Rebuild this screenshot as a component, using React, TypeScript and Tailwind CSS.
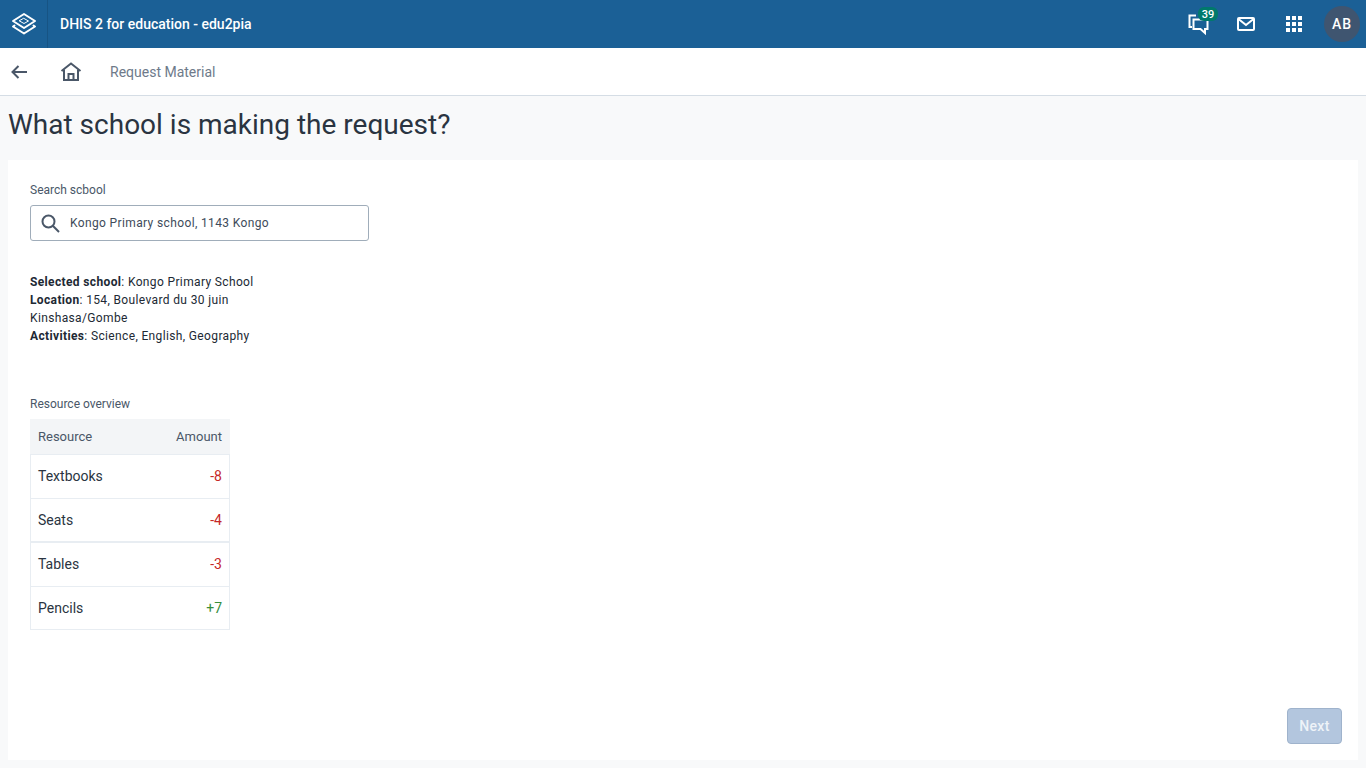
const rows = [
  { name: "Textbooks", amount: "-8", color: "text-[#c62828]", rowClass: "h-[44px] pb-[2px] border-b border-[#e8edf2]" },
  { name: "Seats", amount: "-4", color: "text-[#c62828]", rowClass: "h-[44px] border-b-2 border-[#e8edf2]" },
  { name: "Tables", amount: "-3", color: "text-[#c62828]", rowClass: "h-[44px] pb-[2px] border-b border-[#e8edf2]" },
  { name: "Pencils", amount: "+7", color: "text-[#388e3c]", rowClass: "h-[42px]" },
];

function Logo() {
  return (
    <svg width="26" height="26" viewBox="0 0 26 26" fill="none" stroke="#fff" strokeWidth="2" strokeLinejoin="round" strokeLinecap="round">
      <path d="M13 3 L24 10 L13 17 L2 10 Z" />
      <path d="M13 7.5 L17.5 10 L13 12.5 L8.5 10 Z" strokeWidth="1" />
      <path d="M3.5 14.5 L2 15.5 L13 22.5 L24 15.5 L22.5 14.5" />
    </svg>
  );
}

function Header() {
  return (
    <header className="flex h-12 items-center bg-[#1b6096] text-white">
      <div className="flex h-12 w-12 items-center justify-center border-r border-[#175484]">
        <Logo />
      </div>
      <div className="ml-3 text-sm font-medium">DHIS 2 for education - edu2pia</div>
      <div className="ml-auto flex items-center pr-[6px]">
        <div className="relative flex h-12 w-12 items-center justify-center">
          <svg width="24" height="24" viewBox="0 0 24 24" fill="none" stroke="#fff" strokeWidth="2">
            <path d="M10 3.5 H3.5 V15 H6" />
            <path d="M7.5 7.5 H21.5 V17 H19 V21 L14.5 17 H7.5 Z" />
          </svg>
          <span className="absolute left-[24px] top-[7px] flex h-[14px] w-[20px] items-center justify-center rounded-[6px] bg-[#00796b] text-[11px] font-medium leading-none">
            39
          </span>
        </div>
        <div className="flex h-12 w-12 items-center justify-center">
          <svg width="18" height="14" viewBox="0 0 18 14" fill="none" stroke="#fff" strokeWidth="2">
            <rect x="1" y="1" width="16" height="12" rx="1" />
            <path d="M1.5 2 L9 8 L16.5 2" />
          </svg>
        </div>
        <div className="flex h-12 w-12 items-center justify-center">
          <div className="grid grid-cols-3 gap-[2px]">
            {Array.from({ length: 9 }).map((_, i) => (
              <span key={i} className="h-[4px] w-[4px] bg-white" />
            ))}
          </div>
        </div>
        <div className="ml-[6px] flex h-9 w-9 items-center justify-center rounded-full bg-[#3f5570] text-sm font-medium tracking-[1px]">
          AB
        </div>
      </div>
    </header>
  );
}

function SubBar() {
  return (
    <div className="flex h-12 items-center border-b border-[#d5dde5] bg-white">
      <div className="flex w-[38px] items-center justify-center">
        <svg width="18" height="16" viewBox="0 0 18 16" fill="none" stroke="#4a5768" strokeWidth="2">
          <path d="M17 8 H3 M8.5 2 L2.5 8 L8.5 14" />
        </svg>
      </div>
      <div className="ml-[22px] flex w-[34px] items-center">
        <svg width="22" height="20" viewBox="0 0 22 20" fill="none" stroke="#4a5768" strokeWidth="2">
          <path d="M1.5 9 L11 1.5 L20.5 9" />
          <path d="M4 7.5 V18 H18 V7.5" />
          <path d="M8.5 18 V12 H13.5 V18" />
        </svg>
      </div>
      <div className="ml-4 text-sm text-[#6e7a8a]">Request Material</div>
    </div>
  );
}

export default function App() {
  return (
    <div className="flex h-[768px] flex-col overflow-hidden bg-[#f8f9fa] font-['Roboto',sans-serif] text-[#2a3441] antialiased">
      <Header />
      <SubBar />
      <h1 className="flex h-16 items-center px-2 pb-[7px] text-[28px] font-normal">What school is making the request?</h1>
      <main className="mx-2 mb-2 flex flex-1 flex-col bg-white pl-[22px] pr-4 pt-[22px] pb-4">
        <label className="text-xs leading-4 text-[#4a5768]">Search scbool</label>
        <div className="mt-[7px] flex h-9 w-[339px] items-center rounded-[3px] border border-[#a0adba] bg-white pl-[10px]">
          <svg width="19" height="19" viewBox="0 0 19 19" fill="none" stroke="#4a5768" strokeWidth="2">
            <circle cx="7.5" cy="7.5" r="6" />
            <path d="M11.8 11.8 L18 18" />
          </svg>
          <span className="ml-[10px] text-xs tracking-[0.37px] text-[#404b5a]">Kongo Primary school, 1143 Kongo</span>
        </div>
        <div className="mt-[32px] text-xs leading-[18px] tracking-[0.36px] text-[#212934]">
          <div><b className="font-bold">Selected school</b>: Kongo Primary School</div>
          <div><b className="font-bold">Location</b>: 154, Boulevard du 30 juin</div>
          <div>Kinshasa/Gombe</div>
          <div><b className="font-bold">Activities</b>: Science, English, Geography</div>
        </div>
        <div className="mt-[51px] text-xs leading-4 text-[#4a5768]">Resource overview</div>
        <div className="mt-[7px] w-[200px] border-x border-b border-[#e8edf2] text-sm">
          <div className="-mx-px flex h-[36px] items-center justify-between border-b border-[#e8edf2] bg-[#f3f5f7] px-2 pt-[1px] text-[13px] text-[#4a5768]">
            <span>Resource</span>
            <span>Amount</span>
          </div>
          {rows.map((r) => (
            <div key={r.name} className={`flex items-center justify-between px-[7px] ${r.rowClass}`}>
              <span>{r.name}</span>
              <span className={r.color}>{r.amount}</span>
            </div>
          ))}
        </div>
        <div className="mt-auto flex justify-end">
          <button className="h-9 w-[55px] rounded-[4px] border border-[#9fb3cc] bg-[#b3c6de] text-sm font-medium tracking-[0.3px] text-[#eef3f8]">
            Next
          </button>
        </div>
      </main>
    </div>
  );
}
